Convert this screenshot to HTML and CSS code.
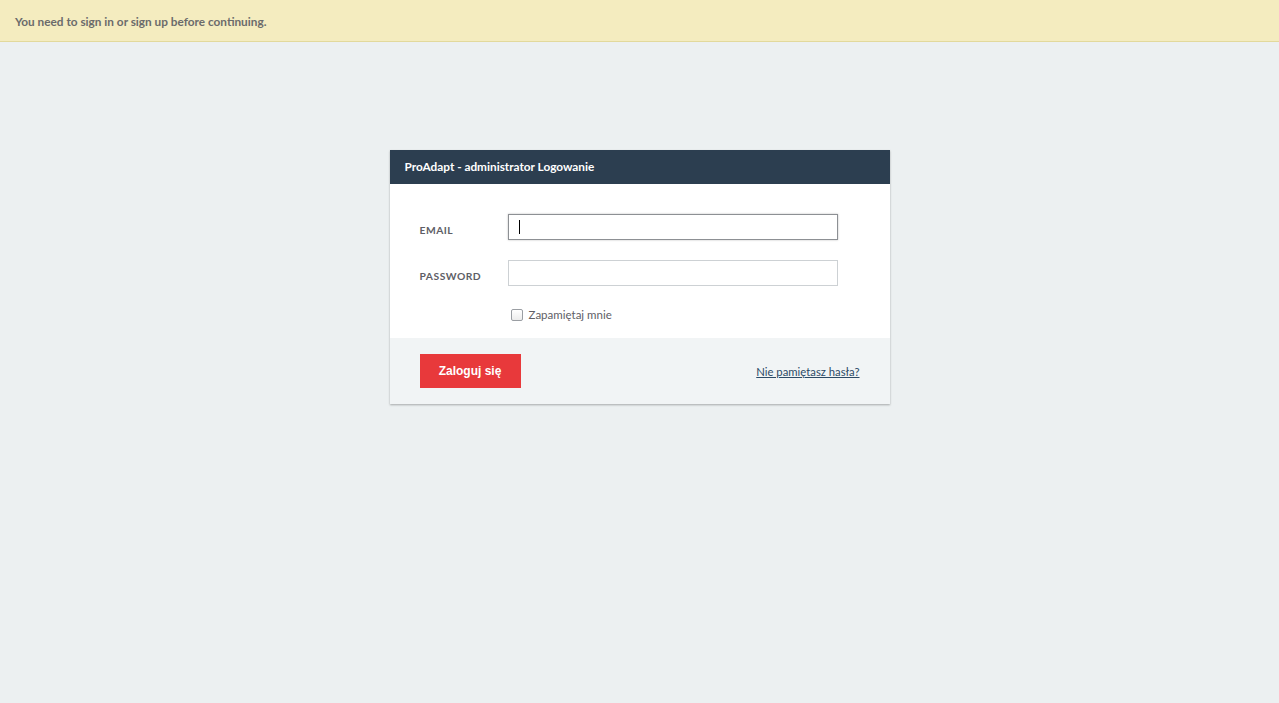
FILE: index.html
```html
<!DOCTYPE html>
<html lang="pl">
<head>
  <meta charset="UTF-8">
  <title>ProAdapt - administrator Logowanie</title>
  <link rel="stylesheet" href="styles.css">
</head>
<body>
  <div class="flash">You need to sign in or sign up before continuing.</div>

  <div class="wrap">
    <form class="login-box">
      <div class="login-head">ProAdapt - administrator Logowanie</div>
      <div class="login-body">
        <div class="row">
          <label class="lbl">EMAIL</label>
          <div class="field focused"><span class="caret"></span></div>
        </div>
        <div class="row">
          <label class="lbl">PASSWORD</label>
          <div class="field"></div>
        </div>
        <div class="row remember">
          <span class="check"></span>
          <span>Zapamiętaj mnie</span>
        </div>
      </div>
      <div class="login-foot">
        <button type="button" class="btn">Zaloguj się</button>
        <a href="#" class="forgot">Nie pamiętasz hasła?</a>
      </div>
    </form>
  </div>
</body>
</html>
```

FILE: styles.css
```css
body {
  margin: 0;
  padding: 0;
  background-color: #ecf0f1;
  font-family: 'Lato', 'Open Sans', sans-serif;
  color: #5b5b60;
  height: 100vh;
}

.flash {
  background-color: #f4ecbf;
  border-bottom: 1px solid #e2d99c;
  height: 41px;
  line-height: 43px;
  padding: 0 15px;
  font-size: 11.8px;
  font-weight: bold;
  color: #6b6b6b;
}

.wrap {
  display: flex;
  justify-content: center;
  padding-top: 108px;
}

.login-box {
  width: 500px;
  background-color: #fff;
  box-shadow: 0 1px 2px rgba(0, 0, 0, 0.3);
}

.login-head {
  background-color: #2c3e50;
  color: #fff;
  height: 34px;
  line-height: 34px;
  padding: 0 15px;
  font-size: 11.8px;
  font-weight: bold;
}

.login-body {
  padding: 30px 52px 5px 30px;
}

.row {
  display: flex;
  align-items: center;
  margin-bottom: 20px;
}

.lbl {
  width: 88px;
  padding-top: 6px;
  font-size: 10.3px;
  font-weight: bold;
  letter-spacing: 0.5px;
  color: #5e5e66;
}

.field {
  width: 328px;
  height: 24px;
  border: 1px solid #cdd1d4;
  background-color: #fff;
  display: flex;
  align-items: center;
}

.field.focused {
  border-color: #8d9094;
  box-shadow: 0 0 2px rgba(0, 0, 0, 0.25);
}

.caret {
  display: block;
  width: 1px;
  height: 14px;
  margin-left: 10px;
  background-color: #000;
}

.remember {
  margin-left: 91px;
  padding-top: 2px;
  margin-bottom: 12px;
  font-size: 11.5px;
  color: #5e5e66;
}

.check {
  width: 10px;
  height: 10px;
  border: 1px solid #9a9ea3;
  border-radius: 2px;
  margin-right: 6px;
  background: linear-gradient(#fff, #ececec);
}

.login-foot {
  background-color: #f1f4f5;
  height: 66px;
  padding: 0 30px;
  display: flex;
  align-items: center;
  justify-content: space-between;
}

.btn {
  width: 101px;
  height: 34px;
  border: none;
  background-color: #e8393b;
  color: #fff;
  font-family: 'Liberation Sans', Arial, sans-serif;
  font-size: 12px;
  font-weight: bold;
  cursor: pointer;
}

.forgot {
  font-size: 11.3px;
  color: #2c4a66;
  text-decoration: underline;
}
```
